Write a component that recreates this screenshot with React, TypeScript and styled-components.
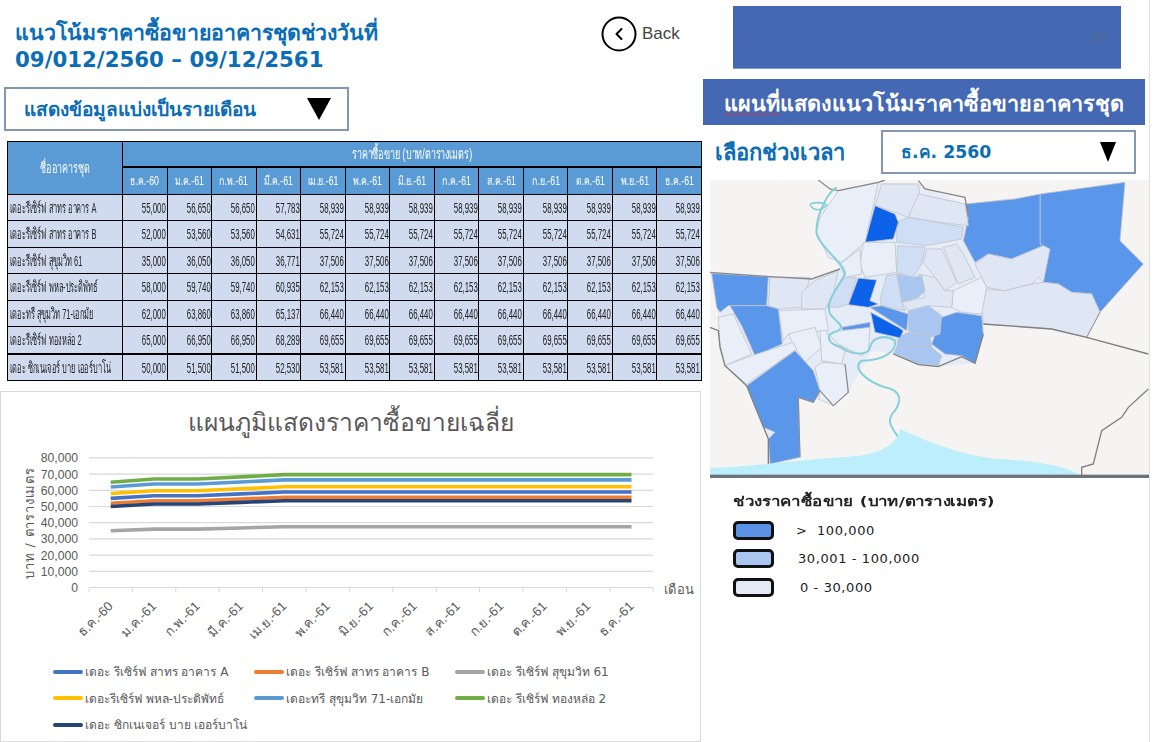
import React from 'react';
import styled, { createGlobalStyle } from 'styled-components';

// == data =========================================================================================
const MONTHS = [ 'ธ.ค.-60', 'ม.ค.-61', 'ก.พ.-61', 'มี.ค.-61', 'เม.ย.-61', 'พ.ค.-61', 'มิ.ย.-61', 'ก.ค.-61', 'ส.ค.-61', 'ก.ย.-61', 'ต.ค.-61', 'พ.ย.-61', 'ธ.ค.-61' ];

const expand = ( a: number, b: number, c: number, d: number ): number[] => [ a, b, b, c, ...Array( 9 ).fill( d ) ];

const ROWS = [
  { name: 'เดอะรีเซิร์ฟ สาทร อาคาร A', legend: 'เดอะ รีเซิร์ฟ สาทร อาคาร A', color: '#4472c4', values: expand( 55000, 56650, 57783, 58939 ) },
  { name: 'เดอะรีเซิร์ฟ สาทร อาคาร B', legend: 'เดอะ รีเซิร์ฟ สาทร อาคาร B', color: '#ed7d31', values: expand( 52000, 53560, 54631, 55724 ) },
  { name: 'เดอะรีเซิร์ฟ สุขุมวิท 61', legend: 'เดอะ รีเซิร์ฟ สุขุมวิท 61', color: '#a5a5a5', values: expand( 35000, 36050, 36771, 37506 ) },
  { name: 'เดอะรีเซิร์ฟ พหล-ประดิพัทธ์', legend: 'เดอะรีเซิร์ฟ พหล-ประดิพัทธ์', color: '#ffc000', values: expand( 58000, 59740, 60935, 62153 ) },
  { name: 'เดอะทรี สุขุมวิท 71-เอกมัย', legend: 'เดอะทรี สุขุมวิท 71-เอกมัย', color: '#5b9bd5', values: expand( 62000, 63860, 65137, 66440 ) },
  { name: 'เดอะรีเซิร์ฟ ทองหล่อ 2', legend: 'เดอะ รีเซิร์ฟ ทองหล่อ 2', color: '#70ad47', values: expand( 65000, 66950, 68289, 69655 ) },
  { name: 'เดอะ ซิกเนเจอร์ บาย เออร์บาโน่', legend: 'เดอะ ซิกเนเจอร์ บาย เออร์บาโน่', color: '#264478', values: expand( 50000, 51500, 52530, 53581 ) },
];

const TICKS = [ 0, 10000, 20000, 30000, 40000, 50000, 60000, 70000, 80000 ];

const FILL = { top: '#5a96ea', hot: '#0a62ea', mid: '#a9c6f1', soft: '#cfdef5', low: '#dfe7f5', pale: '#e9eff9' };

const LAND = '335,175 400,50 520,25 640,30 780,90 1005,60 1260,25 1245,200 1315,270 1185,415 1145,490 1040,465 835,450 810,568 700,578 565,540 500,530 430,655 385,695 345,650 325,685 280,670 285,850 195,870 190,795 125,630 60,575 40,430 20,298 195,308 320,315 405,285';

const DISTRICTS: { fill: string; points: string }[] = [
  { fill: FILL.top, points: '1005,60 1260,25 1245,200 1260,215 1315,270 1185,415 1160,360 1100,355 1060,330 1015,325 1030,225 1005,210' },
  { fill: FILL.top, points: '780,90 930,75 1005,60 1005,210 1015,215 920,255 850,240 810,265 775,200 790,130' },
  { fill: FILL.low, points: '810,270 850,240 920,255 1015,215 1035,225 1015,325 1000,310 980,330 900,350 845,340' },
  { fill: FILL.low, points: '845,345 900,350 980,330 1015,325 1060,330 1100,355 1160,360 1185,415 1145,490 1040,465 835,450 830,400' },
  { fill: FILL.pale, points: '745,350 830,310 845,340 830,420 770,415 740,400' },
  { fill: FILL.top, points: '710,430 755,415 830,425 835,480 810,568 770,545 720,540 680,510' },
  { fill: FILL.mid, points: '610,410 670,395 710,425 705,480 675,490 610,470' },
  { fill: FILL.mid, points: '580,490 610,475 675,485 680,520 575,520' },
  { fill: FILL.mid, points: '565,540 575,520 680,520 710,545 700,575 640,570' },
  { fill: FILL.low, points: '530,30 640,30 645,65 610,130 570,115 510,95' },
  { fill: FILL.low, points: '640,60 780,90 790,155 700,145 610,130' },
  { fill: FILL.soft, points: '575,145 610,130 700,145 775,160 770,195 720,205 660,215 620,210 575,205' },
  { fill: FILL.hot, points: '510,95 570,120 580,145 565,195 480,205' },
  { fill: FILL.pale, points: '400,50 520,25 480,205 410,265 370,250 335,175 345,130' },
  { fill: FILL.pale, points: '475,205 570,205 575,295 480,310 465,270' },
  { fill: FILL.soft, points: '578,215 660,220 650,270 625,310 575,295' },
  { fill: FILL.low, points: '665,225 710,225 755,325 720,350 690,310 655,265' },
  { fill: FILL.low, points: '715,220 755,210 775,240 810,310 760,330' },
  { fill: FILL.low, points: '640,300 690,310 720,350 745,350 740,400 670,395 610,410 590,385 660,370' },
  { fill: FILL.mid, points: '575,300 625,310 650,305 660,350 640,370 590,385' },
  { fill: FILL.soft, points: '545,305 575,300 590,385 600,410 530,395 525,375' },
  { fill: FILL.hot, points: '460,312 515,318 495,380 520,390 490,400 430,392' },
  { fill: FILL.top, points: '495,400 530,395 610,420 605,470' },
  { fill: FILL.hot, points: '497,415 580,460 595,470 585,492 510,475' },
  { fill: FILL.soft, points: '420,310 455,310 430,390 400,400 365,400 385,360' },
  { fill: FILL.pale, points: '405,270 465,225 470,300 420,310' },
  { fill: FILL.top, points: '410,460 495,445 495,460 440,480 415,475' },
  { fill: FILL.low, points: '195,310 315,310 290,400 220,405 190,395' },
  { fill: FILL.low, points: '290,355 330,320 400,290 385,360 360,405 290,405' },
  { fill: FILL.pale, points: '220,410 360,405 370,470 250,480 235,500' },
  { fill: FILL.pale, points: '250,480 330,460 350,520 300,565 270,520' },
  { fill: FILL.pale, points: '345,470 365,470 380,510 420,530 410,570 350,560' },
  { fill: FILL.pale, points: '370,480 405,470 495,460 490,530 470,545 400,510' },
  { fill: FILL.top, points: '20,298 190,308 185,395 70,395 45,415 35,400' },
  { fill: FILL.top, points: '75,395 185,395 220,405 232,510 150,545 110,455' },
  { fill: FILL.pale, points: '40,430 85,420 140,540 60,575 45,510' },
  { fill: FILL.pale, points: '60,575 140,545 265,505 275,525 125,630' },
  { fill: FILL.top, points: '125,635 270,530 325,590 345,650 325,685 280,670 285,850 195,870 190,795 210,775 175,760' },
  { fill: FILL.pale, points: '330,580 350,565 420,570 430,655 385,695 340,675 345,650' },
];

// == styles =======================================================================================
const GlobalStyle = createGlobalStyle`
  html, body {
    margin: 0;
    background: #fff;
    font-family: 'DejaVu Sans', 'Noto Sans', sans-serif;
  }
`;

const Page = styled.div`
  display: flex;
  width: 1149px;
  height: 742px;
  overflow: hidden;
  border-right: 1px solid #e2e2e2;
`;

const LeftColumn = styled.div`
  display: flex;
  flex-direction: column;
  width: 702px;
  flex: none;
`;

const RightColumn = styled.div`
  display: flex;
  flex-direction: column;
  flex: 1;
  min-width: 0;
`;

const Header = styled.div`
  display: flex;
  height: 87px;
  box-sizing: border-box;
  padding: 16px 0 0 15px;
`;

const Title = styled.h1`
  width: 586px;
  margin: 3px 0 0;
  font-size: 21.3px;
  line-height: 27px;
  font-weight: 700;
  color: #0b6db5;
`;

const BackButton = styled.div`
  display: flex;
  align-items: center;
  gap: 5px;
  height: 35px;
  font-family: 'Liberation Sans', sans-serif;
  font-size: 17px;
  color: #444;
`;

const Dropdown = styled.div<{ $width: number; $textSize: number; $pad: number }>`
  display: flex;
  align-items: center;
  justify-content: space-between;
  box-sizing: border-box;
  width: ${ ( p ) => p.$width }px;
  height: 44px;
  padding: 0 ${ ( p ) => p.$pad }px 0 18px;
  border: 2px solid #8497b0;
  background: #fff;
  font-size: ${ ( p ) => p.$textSize }px;
  font-weight: 700;
  color: #0b6db5;
`;

const ViewDropdownSlot = styled.div`
  margin-left: 4px;
`;

const Arrow = styled.span<{ $w: number; $h: number }>`
  width: 0;
  height: 0;
  border-left: ${ ( p ) => p.$w }px solid transparent;
  border-right: ${ ( p ) => p.$w }px solid transparent;
  border-top: ${ ( p ) => p.$h }px solid #000;
`;

const Table = styled.table`
  width: 695px;
  margin: 10px 0 0 7px;
  border-collapse: collapse;
  table-layout: fixed;
  font-family: 'Liberation Sans', sans-serif;
  font-size: 15px;
  line-height: 18px;
`;

const HeadCell = styled.th<{ $thick?: boolean; $month?: boolean }>`
  height: ${ ( p ) => p.$thick ? 24 : 26 }px;
  padding: 0;
  border: 1px solid #000;
  border-bottom-width: ${ ( p ) => p.$thick ? 2 : 1 }px;
  background: #5b9bd5;
  color: #fff;
  font-size: ${ ( p ) => p.$month ? 12.5 : 15 }px;
  font-weight: 400;
  text-align: center;
  white-space: nowrap;
`;

const BodyCell = styled.td<{ $name?: boolean; $heavy?: boolean }>`
  height: 25.5px;
  padding: ${ ( p ) => p.$name ? '0 0 0 2px' : '0 1px 0 0' };
  border: 1px solid #000;
  border-top-width: ${ ( p ) => p.$heavy ? 2 : 1 }px;
  background: #d0dbef;
  color: #222;
  font-size: ${ ( p ) => p.$name ? 15 : 14 }px;
  text-align: ${ ( p ) => p.$name ? 'left' : 'right' };
  white-space: nowrap;
`;

const Narrow = styled.span<{ $origin: string; $scale: number }>`
  display: inline-block;
  white-space: nowrap;
  transform: scaleX(${ ( p ) => p.$scale });
  transform-origin: ${ ( p ) => p.$origin } center;
`;

const ChartCard = styled.section`
  box-sizing: border-box;
  width: 701px;
  height: 351px;
  margin-top: 10px;
  border: 1px solid #d9d9d9;
  background: #fff;
`;

const ChartTitle = styled.h2`
  margin: 13px 0 0;
  height: 35px;
  font-size: 24.6px;
  line-height: 35px;
  font-weight: 400;
  text-align: center;
  color: #595959;
`;

const ChartCanvas = styled.svg`
  display: block;
  width: 699px;
  height: 218px;
`;

const Legend = styled.div`
  display: grid;
  grid-template-columns: 201px 201px 201px;
  grid-auto-rows: 26.5px;
  padding: 0 0 0 52px;
`;

const LegendItem = styled.div`
  display: flex;
  align-items: center;
  gap: 2px;
  font-size: 12px;
  color: #595959;
  white-space: nowrap;
`;

const LegendLine = styled.span<{ $color: string }>`
  flex: none;
  width: 30px;
  height: 4px;
  border-radius: 2px;
  background: ${ ( p ) => p.$color };
`;

const TopBox = styled.div`
  display: flex;
  align-items: center;
  justify-content: space-between;
  box-sizing: border-box;
  width: 388px;
  height: 63px;
  margin: 6px 0 0 31px;
  padding: 0 14px 0 2px;
  background: #4468b3;
  border-bottom: 1px solid #7f9bd0;
  color: #56688f;
  font-size: 13px;
`;

const Banner = styled.div`
  box-sizing: border-box;
  width: 442px;
  height: 46px;
  margin: 10px 0 0 1px;
  background: #4468b3;
  color: #fff;
  font-size: 21.6px;
  font-weight: 700;
  line-height: 50px;
  text-align: center;
  white-space: nowrap;
`;

const Misspelt = styled.span`
  text-decoration: underline wavy #d23a3a 1px;
`;

const PeriodRow = styled.div`
  display: flex;
  align-items: center;
  height: 44px;
  margin-top: 5px;
  padding-left: 13px;
`;

const PeriodLabel = styled.div`
  width: 166px;
  font-size: 22px;
  font-weight: 700;
  color: #0b6db5;
`;

const MapFrame = styled.svg`
  display: block;
  width: 440px;
  height: 298px;
  margin: 6px 0 0 8px;
  background: #f6f4f2;
`;

const MapLegend = styled.div`
  display: flex;
  flex-direction: column;
  margin: 15px 0 0 31px;
  font-family: 'DejaVu Sans', sans-serif;
  font-size: 13px;
  color: #222;
`;

const MapLegendTitle = styled.div`
  height: 23px;
  line-height: 18px;
  font-weight: 700;
`;

const MapLegendRow = styled.div`
  display: flex;
  align-items: center;
  height: 28.5px;
`;

const MapSwatch = styled.span<{ $fill: string }>`
  flex: none;
  width: 41px;
  height: 19px;
  box-sizing: border-box;
  border: 3px solid #111;
  border-radius: 5px;
  background: ${ ( p ) => p.$fill };
`;

const MapLegendValue = styled.span<{ $indent: number }>`
  margin-left: ${ ( p ) => p.$indent }px;
  letter-spacing: 0.6px;
  white-space: pre;
`;

// == chart ========================================================================================
const xOf = ( index: number ): number => 111.7 + index * 43.4;
const yOf = ( value: number ): number => 587.5 - value / 10000 * 16.2;

const PriceChart = (): JSX.Element => (
  <ChartCanvas viewBox="2 440 699 218" fontFamily="'Liberation Sans', sans-serif">
    { TICKS.map( ( tick ) => (
      <g key={ tick }>
        <line x1="90" x2="654" y1={ yOf( tick ) } y2={ yOf( tick ) } stroke="#d9d9d9" strokeWidth="1.2" />
        <text x="79" y={ yOf( tick ) + 4.5 } textAnchor="end" fontSize="12.2" fill="#595959">{ tick.toLocaleString( 'en-US' ) }</text>
      </g>
    ) ) }
    { MONTHS.map( ( month, i ) => (
      <g key={ i }>
        <line x1={ 90 + i * 43.4 } x2={ 90 + i * 43.4 } y1="587.5" y2="592" stroke="#d9d9d9" />
        <text
          x={ xOf( i ) + 3 }
          y="607"
          textAnchor="end"
          fontSize="13"
          fill="#595959"
          transform={ `rotate(-45 ${ xOf( i ) + 3 } 607)` }
        >{ month }</text>
      </g>
    ) ) }
    <line x1="654" x2="654" y1="587.5" y2="592" stroke="#d9d9d9" />
    <text x="665" y="594" fontSize="13" letterSpacing="0.3" fill="#595959" fontFamily="'DejaVu Sans', sans-serif">เดือน</text>
    <text
      x="35"
      y="523"
      textAnchor="middle"
      fontSize="13"
      letterSpacing="0.8"
      fill="#595959"
      fontFamily="'DejaVu Sans', sans-serif"
      transform="rotate(-90 35 523)"
    >บาท / ตารางเมตร</text>
    { ROWS.map( ( row ) => (
      <polyline
        key={ row.legend }
        points={ row.values.map( ( v, i ) => `${ xOf( i ) },${ yOf( v ) }` ).join( ' ' ) }
        fill="none"
        stroke={ row.color }
        strokeWidth="3.6"
        strokeLinejoin="round"
      />
    ) ) }
  </ChartCanvas>
);

// == map ==========================================================================================
const DistrictMap = (): JSX.Element => (
  <MapFrame viewBox="15 18 1320 894">
    <defs>
      <filter id="soften"><feGaussianBlur stdDeviation="2" /></filter>
    </defs>
    <g filter="url(#soften)">
      <polygon points={ LAND } fill="#e6ecf7" />
      { DISTRICTS.map( ( d, i ) => (
        <polygon key={ i } points={ d.points } fill={ d.fill } stroke="#c0c4cc" strokeWidth="2.5" strokeLinejoin="round" />
      ) ) }
      <polyline points="15,295 195,308 320,315 405,285" fill="none" stroke="#8a8a8a" strokeWidth="4" />
      <polyline points="835,450 1040,465 1145,490 1330,540" fill="none" stroke="#808080" strokeWidth="4" />
      <polyline points="15,460 40,470 45,520 60,575 125,635 190,795 190,870" fill="none" stroke="#808080" strokeWidth="4" />
      <polyline points="565,540 640,572 700,578 770,548 810,568 835,480" fill="none" stroke="#808080" strokeWidth="4" />
      <polyline points="1185,415 1145,490" fill="none" stroke="#909090" strokeWidth="3" />
      <polyline points="285,850 280,670 325,685 345,650 385,695 430,655 420,570" fill="none" stroke="#8a8a8a" strokeWidth="3.5" />
      <polyline points="1330,645 1270,700 1250,730 1190,770 1165,870 1130,880 1130,905" fill="none" stroke="#808080" strokeWidth="4" />
      <polyline points="340,18 375,45 400,50 520,25 540,18" fill="none" stroke="#8a8a8a" strokeWidth="4" />
      <polyline points="640,20 660,45 780,70 790,130" fill="none" stroke="#8a8a8a" strokeWidth="4" />
      <path
        d="M395,40 C360,60 330,140 335,180 C345,220 420,270 420,300 C400,340 360,380 375,420 C400,450 420,455 400,470 C360,480 360,505 410,520 C440,545 490,545 495,520 C500,490 540,480 570,500 C575,530 540,560 470,560 C440,580 480,620 540,640 C590,650 590,680 570,710 C540,740 560,760 580,790"
        fill="none"
        stroke="#86cfdc"
        strokeWidth="6"
      />
      <path d="M315,90 C330,85 350,85 365,92 C350,110 325,115 315,90" fill="none" stroke="#86cfdc" strokeWidth="5" />
      <path
        d="M15,882 C120,880 250,860 430,848 C520,845 580,810 585,765 C640,790 760,845 880,855 C980,860 1070,870 1130,905 L15,905 Z"
        fill="#bdeefc"
      />
    </g>
    <rect x="15" y="902" width="1320" height="10" fill="#6d7378" />
  </MapFrame>
);

// == element ======================================================================================
export default function App(): JSX.Element {
  return (
    <Page>
      <GlobalStyle />
      <LeftColumn>
        <Header>
          <Title>แนวโน้มราคาซื้อขายอาคารชุดช่วงวันที่<br />09/012/2560 – 09/12/2561</Title>
          <BackButton>
            <svg width="36" height="36" viewBox="0 0 36 36" fill="none" stroke="#000">
              <circle cx="18" cy="18" r="16.5" strokeWidth="2" />
              <path d="M20.5 13 L15.5 18 L20.5 23" strokeWidth="2" strokeLinecap="round" strokeLinejoin="round" />
            </svg>
            Back
          </BackButton>
        </Header>
        <ViewDropdownSlot>
          <Dropdown $width={ 345 } $textSize={ 19 } $pad={ 16 }>
            แสดงข้อมูลแบ่งเป็นรายเดือน
            <Arrow $w={ 12 } $h={ 22 } />
          </Dropdown>
        </ViewDropdownSlot>
        <Table>
          <colgroup>
            <col style={ { width: 115 } } />
            { MONTHS.map( ( m, i ) => <col key={ i } /> ) }
          </colgroup>
          <thead>
            <tr>
              <HeadCell rowSpan={ 2 }><Narrow $origin="center" $scale={ 0.6 }>ชื่ออาคารชุด</Narrow></HeadCell>
              <HeadCell $thick colSpan={ 13 }><Narrow $origin="center" $scale={ 0.6 }>ราคาซื้อขาย (บาท/ตารางเมตร)</Narrow></HeadCell>
            </tr>
            <tr>
              { MONTHS.map( ( m, i ) => (
                <HeadCell key={ i } $month><Narrow $origin="center" $scale={ 0.7 }>{ m }</Narrow></HeadCell>
              ) ) }
            </tr>
          </thead>
          <tbody>
            { ROWS.map( ( row, r ) => (
              <tr key={ row.name }>
                <BodyCell $name $heavy={ r === 6 }>
                  <Narrow $origin="left" $scale={ 0.495 }>{ row.name }</Narrow>
                </BodyCell>
                { row.values.map( ( v, i ) => (
                  <BodyCell key={ i } $heavy={ r === 6 }>
                    <Narrow $origin="right" $scale={ 0.56 }>{ v.toLocaleString( 'en-US' ) }</Narrow>
                  </BodyCell>
                ) ) }
              </tr>
            ) ) }
          </tbody>
        </Table>
        <ChartCard>
          <ChartTitle>แผนภูมิแสดงราคาซื้อขายเฉลี่ย</ChartTitle>
          <PriceChart />
          <Legend>
            { ROWS.map( ( row ) => (
              <LegendItem key={ row.legend }>
                <LegendLine $color={ row.color } />
                { row.legend }
              </LegendItem>
            ) ) }
          </Legend>
        </ChartCard>
      </LeftColumn>
      <RightColumn>
        <TopBox>
          <span>⋮</span>
          <span>ดัง</span>
        </TopBox>
        <Banner><Misspelt>แผนที่</Misspelt>แสดงแนวโน้มราคาซื้อขายอาคารชุด</Banner>
        <PeriodRow>
          <PeriodLabel>เลือกช่วงเวลา</PeriodLabel>
          <Dropdown $width={ 255 } $textSize={ 17.3 } $pad={ 18 }>
            ธ.ค. 2560
            <Arrow $w={ 8.5 } $h={ 20 } />
          </Dropdown>
        </PeriodRow>
        <DistrictMap />
        <MapLegend>
          <MapLegendTitle>
            <Narrow $origin="left" $scale={ 1.3 }>ช่วงราคาซื้อขาย (บาท/ตารางเมตร)</Narrow>
          </MapLegendTitle>
          <MapLegendRow><MapSwatch $fill="#5a92e8" /><MapLegendValue $indent={ 22 }>{ '>  100,000' }</MapLegendValue></MapLegendRow>
          <MapLegendRow><MapSwatch $fill="#a9c6f1" /><MapLegendValue $indent={ 24 }>30,001 - 100,000</MapLegendValue></MapLegendRow>
          <MapLegendRow><MapSwatch $fill="#e3eaf6" /><MapLegendValue $indent={ 26 }>0 - 30,000</MapLegendValue></MapLegendRow>
        </MapLegend>
      </RightColumn>
    </Page>
  );
}
